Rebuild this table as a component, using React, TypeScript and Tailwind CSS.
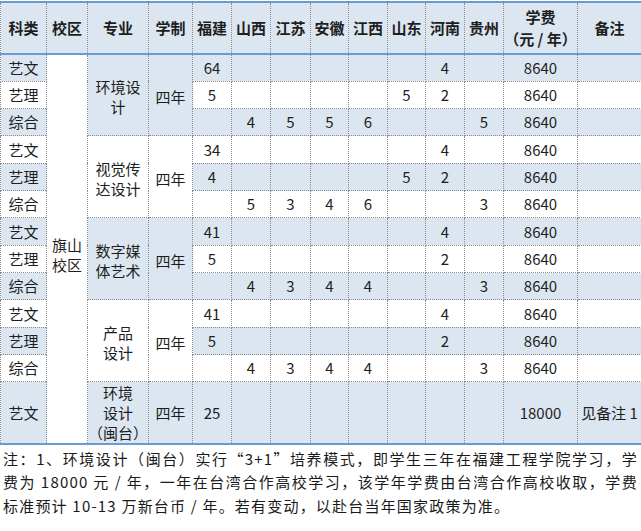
import React from 'react'

const FONT = '"Noto Sans CJK SC", "Noto Sans", sans-serif'

const PROVINCES = ['福建', '山西', '江苏', '安徽', '江西', '山东', '河南', '贵州']
const WIDTHS = [46, 41, 61, 44, 39, 39, 40, 38, 39, 38, 39, 39, 74, 64]

type Row = { kind: string; counts: string[]; fee: string; note: string }
type Block = { major: string[]; rows: Row[] }

const r = (kind: string, counts: string[], fee = '8640', note = ''): Row => ({ kind, counts, fee, note })

const BLOCKS: Block[] = [
  {
    major: ['环境设', '计'],
    rows: [
      r('艺文', ['64', '', '', '', '', '', '4', '']),
      r('艺理', ['5', '', '', '', '', '5', '2', '']),
      r('综合', ['', '4', '5', '5', '6', '', '', '5']),
    ],
  },
  {
    major: ['视觉传', '达设计'],
    rows: [
      r('艺文', ['34', '', '', '', '', '', '4', '']),
      r('艺理', ['4', '', '', '', '', '5', '2', '']),
      r('综合', ['', '5', '3', '4', '6', '', '', '3']),
    ],
  },
  {
    major: ['数字媒', '体艺术'],
    rows: [
      r('艺文', ['41', '', '', '', '', '', '4', '']),
      r('艺理', ['5', '', '', '', '', '', '2', '']),
      r('综合', ['', '4', '3', '4', '4', '', '', '3']),
    ],
  },
  {
    major: ['产品', '设计'],
    rows: [
      r('艺文', ['41', '', '', '', '', '', '4', '']),
      r('艺理', ['5', '', '', '', '', '', '2', '']),
      r('综合', ['', '4', '3', '4', '4', '', '', '3']),
    ],
  },
  {
    major: ['环境', '设计', '（闽台）'],
    rows: [r('艺文', ['25', '', '', '', '', '', '', ''], '18000', '见备注 1')],
  },
]

const cell = 'border border-dotted border-[#8c8c8c] p-0 text-center align-middle'
const blueTop = '[border-top:2px_solid_#6b9bd6]'
const blueBottom = '[border-bottom:2px_solid_#6b9bd6]'

export default function App() {
  const totalRows = BLOCKS.reduce((n, b) => n + b.rows.length, 0)
  let rowIndex = 0

  return (
    <div className="w-[641px] h-[531px] bg-white text-[#1e1e1e]" style={{ fontFamily: FONT }}>
      <table className="w-[641px] table-fixed border-collapse mt-px text-[15px] leading-[20px]">
        <colgroup>
          {WIDTHS.map((w, i) => (
            <col key={i} style={{ width: w }} />
          ))}
        </colgroup>
        <thead>
          <tr className="h-[52px] bg-[#dce6f1]">
            {['科类', '校区', '专业', '学制', ...PROVINCES].map(h => (
              <th key={h} className={`${cell} ${blueTop} ${blueBottom} font-bold`}>{h}</th>
            ))}
            <th className={`${cell} ${blueTop} ${blueBottom} font-bold leading-[22px]`}>
              学费
              <br />
              （元 / 年）
            </th>
            <th className={`${cell} ${blueTop} ${blueBottom} font-bold`}>备注</th>
          </tr>
        </thead>
        <tbody>
          {BLOCKS.map((block, bi) => {
            const mergedBg = bi % 2 === 0 ? 'bg-[#dce6f1]' : 'bg-white'
            const lastBlock = bi === BLOCKS.length - 1
            return block.rows.map((row, ri) => {
              const idx = rowIndex++
              const bg = idx % 2 === 0 ? 'bg-[#dce6f1]' : 'bg-white'
              const isLast = lastBlock && ri === block.rows.length - 1
              const edge = isLast ? blueBottom : ''
              return (
                <tr key={`${bi}-${ri}`} className={isLast ? 'h-[62px]' : 'h-[27.33px]'}>
                  <td className={`${cell} ${bg} ${edge}`}>{row.kind}</td>
                  {idx === 0 && (
                    <td rowSpan={totalRows} className={`${cell} ${blueBottom} bg-white pt-3`}>
                      旗山
                      <br />
                      校区
                    </td>
                  )}
                  {ri === 0 && (
                    <>
                      <td rowSpan={block.rows.length} className={`${cell} ${mergedBg} ${lastBlock ? blueBottom : 'pt-1'}`}>
                        {block.major.map((m, mi) => (
                          <div key={mi}>{m}</div>
                        ))}
                      </td>
                      <td rowSpan={block.rows.length} className={`${cell} ${mergedBg} ${lastBlock ? blueBottom : 'pt-1'}`}>
                        四年
                      </td>
                    </>
                  )}
                  {row.counts.map((c, ci) => (
                    <td key={ci} className={`${cell} ${bg} ${edge}`}>{c}</td>
                  ))}
                  <td className={`${cell} ${bg} ${edge}`}>{row.fee}</td>
                  <td className={`${cell} ${bg} ${edge} whitespace-nowrap`}>{row.note}</td>
                </tr>
              )
            })
          })}
        </tbody>
      </table>

      {/* footnote */}
      <p className="mt-[2px] px-[3px] text-[15px] leading-[23.5px] tracking-[1.2px] text-justify text-[#1a1a1a]">
        注：1、环境设计（闽台）实行“3+1”培养模式，即学生三年在福建工程学院学习，学费为 18000 元 / 年，一年在台湾合作高校学习，该学年学费由台湾合作高校收取，学费标准预计 10-13 万新台币 / 年。若有变动，以赴台当年国家政策为准。
      </p>
    </div>
  )
}
